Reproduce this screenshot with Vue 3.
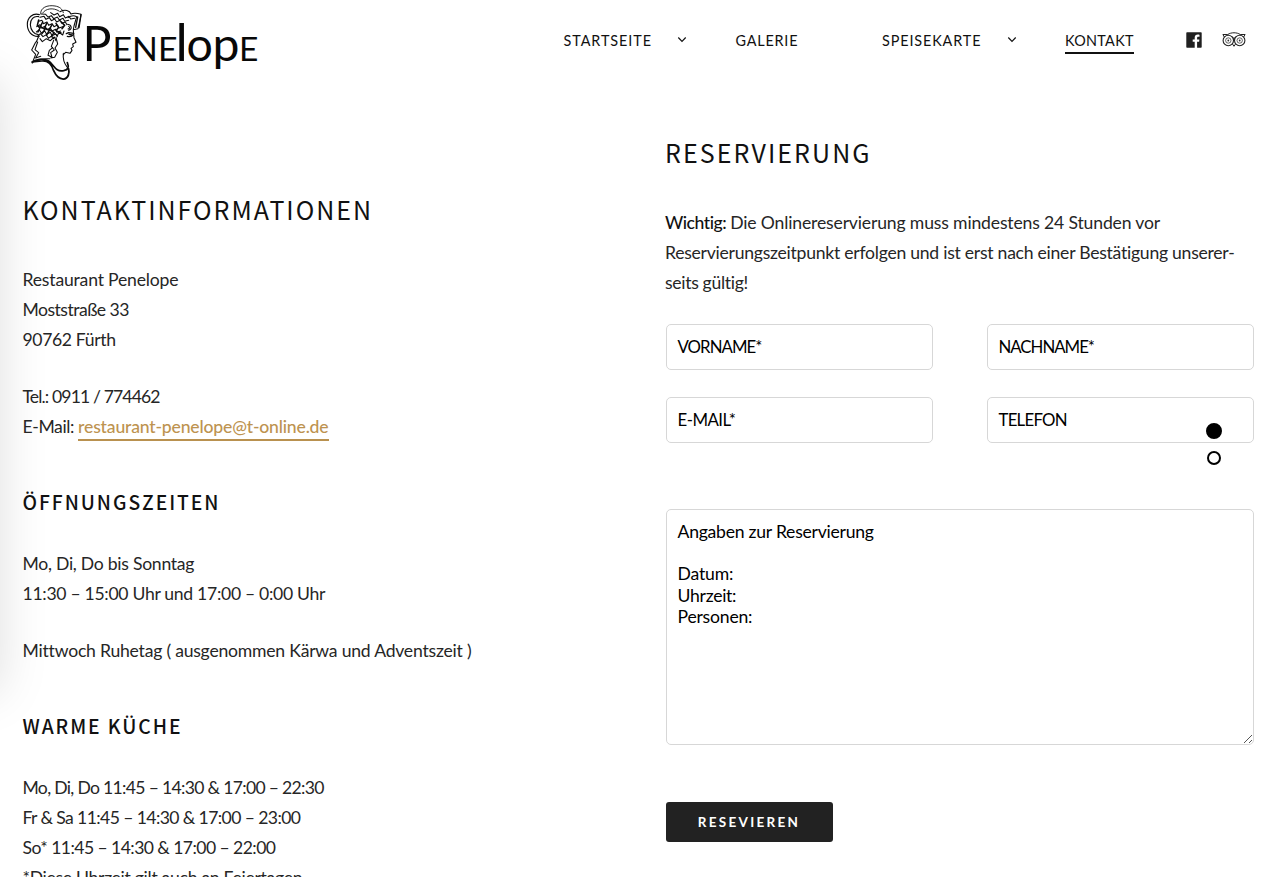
<script setup>
// Tracks each line of text out to a set width in pixels.
const vFit = {
  mounted(el, { value }) {
    const count = el.textContent.trim().length
    const natural = el.getBoundingClientRect().width
    el.style.letterSpacing = `${(value - natural) / (count - 1)}px`
  },
}

const fields = [
  { label: 'VORNAME*', width: 85 },
  { label: 'NACHNAME*', width: 96.5 },
  { label: 'E-MAIL*', width: 58.5 },
  { label: 'TELEFON', width: 69 },
]
</script>

<template>
  <div class="page">
    <div class="side-shadow"></div>

    <header class="header">
      <a class="logo">
        <svg width="270" height="84" viewBox="0 0 270 84">
          <g transform="translate(20 0) scale(.33333)" fill="none" stroke="#0b0b0b" stroke-width="3.2" stroke-linejoin="round" stroke-linecap="round">
            <path stroke-width="3.4" d="M58 44C38 38 22 53 22 73C22 94 35 110 55 109M56 50C40 47 31 59 31 74C32 91 42 103 55 104" />
            <path stroke-width="2.600" d="M62 42C60 23 82 14 105 18C118 20 127 26 130 38M68 39C77 25 100 22 117 33" />
            <path d="M120 35C135 27 149 31 153 42C164 37 174 40 183 43L182 51L174 86L160 89L162 78L170 50C158 44 151 48 144 53" />
            <path stroke-width="4" d="M183 44L177 83M173 51L167 82" />
            <path d="M60 52L72 49L78 58L88 53L94 62L104 57L110 66L120 61L126 70L136 66L141 74" />
            <path d="M64 42L77 43L84 51L94 47L101 56L112 51L118 60L129 55L134 64L146 61" />
            <path d="M92 38L102 45L113 40L119 50L130 44L136 54L147 49L152 57L164 55" />
            <path d="M56 64L66 61L70 71L81 66L86 76L96 71L102 80L112 75L117 84L128 80" />
            <path d="M50 80L60 74L65 84L75 79L81 89L91 84L96 93L107 88L111 97L122 93" />
            <path d="M49 96L58 89L64 99L74 93L80 103L91 97L96 107L107 102L112 110" />
            <path d="M53 109L61 101L69 110L79 104L85 115L95 108L101 116" />
            <path stroke-width="4.600" d="M56 60L52 76L60 84L54 96M68 66L61 80L75 88L66 101M80 70L74 84L88 91L79 106M96 74L88 88L102 98L94 110M108 70L116 82L108 92L123 99M124 66L134 76L126 86" />
            <path d="M143 73C155 75 158 87 146 91M146 79C151 82 149 86 144 87M132 93L128 105L117 97L112 107L102 98" />
            <path stroke-width="4" d="M139 101L146 98L161 100M142 109C149 111 156 109 160 104M147 103L156 105" />
            <path d="M160 91L162 113L168 127L158 132L160 140L153 145L156 151L150 160L137 157L130 164" />
            <path d="M58 108C50 115 54 123 46 128L35 150L47 163L38 186L60 178L78 176L89 176M53 126L45 149L56 158L47 174L62 169M60 116L67 125L79 116L91 122L103 111L108 122" />
            <path d="M101 121L94 139L103 150L92 158L96 172L84 166L88 151L98 143M108 112L113 132L105 144L112 157L104 172L92 174" />
            <path d="M130 160C128 177 132 190 142 202C151 217 145 235 130 238" />
            <path stroke-width="5.2" d="M37 188C49 174 79 176 91 187C105 202 109 216 131 212C144 209 148 202 142 188M36 186L65 183C84 181 96 196 101 212C109 230 119 238 132 237C145 235 149 220 146 207" />
          </g>
          <g class="wordmark">
            <text x="82.500" y="61" font-size="49" textLength="29" lengthAdjust="spacingAndGlyphs">P</text>
            <text x="112.500" y="61" font-size="33.500" textLength="65" lengthAdjust="spacingAndGlyphs">ENE</text>
            <text x="175.500" y="61" font-size="52">l</text>
            <text x="186.500" y="61" font-size="46.500">o</text>
            <text x="212.500" y="61" font-size="46.500" textLength="27" lengthAdjust="spacingAndGlyphs">p</text>
            <text x="239" y="61" font-size="33.500">E</text>
          </g>
        </svg>
      </a>

      <nav class="nav">
        <a class="start"><span v-fit="87.5">STARTSEITE</span>
          <svg class="chev" width="10" height="8" viewBox="0 0 10 8"><path d="M1.300 1.500L5 5.300L8.700 1.500" /></svg>
        </a>
        <a class="gallery"><span v-fit="62">GALERIE</span></a>
        <a class="menu"><span v-fit="98.5">SPEISEKARTE</span>
          <svg class="chev" width="10" height="8" viewBox="0 0 10 8"><path d="M1.300 1.500L5 5.300L8.700 1.500" /></svg>
        </a>
        <a class="contact"><span v-fit="68.5">KONTAKT</span></a>
        <svg class="fb" width="16" height="16" viewBox="0 0 16 16">
          <path fill="#202020" d="M1 .3H15Q15.700 .3 15.700 1V15Q15.700 15.700 15 15.700H11.100V9.800H13.100L13.400 7.400H11.100V6C11.100 5.200 11.400 4.800 12.400 4.800H13.500V2.700C13 2.600 12.400 2.600 11.800 2.600C9.900 2.600 8.700 3.700 8.700 5.700V7.400H6.700V9.800H8.700V15.700H1Q.3 15.700 .3 15V1Q.3 .3 1 .3Z" />
        </svg>
        <svg class="trip" width="24" height="16" viewBox="0 0 24 16" fill="none" stroke="#222">
          <path d="M5.800 2.500C9 .2 15 .2 18.200 2.500M5.800 2.500H.9L2.300 5M18.200 2.500H23.100L21.700 5" stroke-width="1" />
          <circle cx="6.300" cy="8.500" r="5.200" stroke-width="1.100" /><circle cx="17.700" cy="8.500" r="5.200" stroke-width="1.100" />
          <circle cx="6.300" cy="8.500" r="2.700" stroke-width=".7" /><circle cx="17.700" cy="8.500" r="2.700" stroke-width=".7" />
          <circle cx="6.300" cy="8.500" r=".9" fill="#333" stroke="none" /><circle cx="17.700" cy="8.500" r=".9" fill="#333" stroke="none" />
          <path d="M10.500 12L12 14.300L13.500 12M10.300 4.500Q12 6 12 8.500Q12 6 13.700 4.500" stroke-width="1" />
        </svg>
      </nav>
    </header>

    <main class="columns">
      <section class="info">
        <h2><span v-fit="348.5">KONTAKTINFORMATIONEN</span></h2>
        <p>
          <span v-fit="156">Restaurant Penelope</span><br>
          <span v-fit="107">Moststraße 33</span><br>
          <span v-fit="93.5">90762 Fürth</span>
        </p>
        <p>
          <span v-fit="138">Tel.: 0911 / 774462</span><br>
          <span v-fit="52">E-Mail:</span><a class="mail"><span v-fit="250.5">restaurant-penelope@t-online.de</span></a>
        </p>
        <h3><span v-fit="196">ÖFFNUNGSZEITEN</span></h3>
        <p>
          <span v-fit="172">Mo, Di, Do bis Sonntag</span><br>
          <span v-fit="303">11:30 – 15:00 Uhr und 17:00 – 0:00 Uhr</span>
        </p>
        <p><span v-fit="448.5">Mittwoch Ruhetag ( ausgenommen Kärwa und Adventszeit )</span></p>
        <h3><span v-fit="158">WARME KÜCHE</span></h3>
        <p>
          <span v-fit="302">Mo, Di, Do 11:45 – 14:30 &amp; 17:00 – 22:30</span><br>
          <span v-fit="278.5">Fr &amp; Sa 11:45 – 14:30 &amp; 17:00 – 23:00</span><br>
          <span v-fit="253.5">So* 11:45 – 14:30 &amp; 17:00 – 22:00</span><br>
          <span v-fit="280">*Diese Uhrzeit gilt auch an Feiertagen</span>
        </p>
      </section>

      <section class="booking">
        <h2><span v-fit="204.5">RESERVIERUNG</span></h2>
        <p>
          <span v-fit="62" class="strong">Wichtig:</span><span v-fit="430" class="after">Die Onlinereservierung muss mindestens 24 Stunden vor</span><br>
          <span v-fit="570">Reservierungszeitpunkt erfolgen und ist erst nach einer Bestätigung unserer-</span><br>
          <span v-fit="83.5">seits gültig!</span>
        </p>
        <form>
          <div class="fields">
            <div v-for="field in fields" :key="field.label" class="field">
              <span v-fit="field.width">{{ field.label }}</span>
            </div>
          </div>
          <div class="message">
            <span v-fit="196.5">Angaben zur Reservierung</span><br><br>
            <span v-fit="56">Datum:</span><br>
            <span v-fit="59">Uhrzeit:</span><br>
            <span v-fit="75">Personen:</span>
            <svg class="grip" width="10" height="10" viewBox="0 0 10 10"><path d="M1 9L9 1M6 9L9 6" /></svg>
          </div>
          <button type="button"><span v-fit="100">RESEVIEREN</span></button>
        </form>
      </section>
    </main>

    <div class="dots"><i class="dot on"></i><i class="dot"></i></div>
  </div>
</template>

<style>
html, body { background: #fff; overflow: hidden; }
</style>

<style scoped>
.page { position: relative; height: 877px; overflow: hidden; font-family: Lato, sans-serif; font-size: 17.600px; line-height: 30px; color: #262626; }
.page span { display: inline-block; white-space: nowrap; }
.side-shadow { position: absolute; left: -300px; top: 78px; width: 300px; height: 614px; box-shadow: 0 0 46px rgba(0, 0, 0, .13); }
.header { position: relative; display: flex; height: 84px; }
.logo { width: 270px; }
.logo svg { display: block; }
.wordmark { font-family: Lato, sans-serif; fill: #080808; }
.nav { display: flex; align-items: flex-start; padding: 29px 0 0 293.500px; font-size: 14.400px; line-height: 24px; color: #111; }
.nav a { display: flex; align-items: center; height: 22px; flex: none; }
.nav a span { position: relative; top: 1px; }
.start { width: 172px; }
.gallery { width: 146.500px; }
.menu { width: 183px; }
.chev { margin-left: auto; fill: none; stroke: #111; stroke-width: 1.200; }
.start .chev, .menu .chev { margin-right: 48.500px; }
.nav .contact { width: 69px; border-bottom: 2px solid #111; height: 23px; }
.contact span { margin-top: -1px; }
.fb { margin: 3px 0 0 51.500px; flex: none; }
.trip { margin: 3px 0 0 20.500px; flex: none; }
.columns { position: relative; display: grid; grid-template-columns: 642.500px 590px; padding-left: 22.500px; }
.info { padding-top: 105px; }
.booking { padding-top: 48px; }
h2, h3 { margin: 0; font-family: "Noto Sans CJK SC", sans-serif; color: #111; }
h2 { height: 40px; line-height: 40px; font-size: 25px; font-weight: 400; margin-bottom: 36px; }
h3 { height: 30px; line-height: 30px; font-size: 19.300px; font-weight: 500; margin: 45px 0 32px; }
p { margin: 0 0 27px; }
.mail { display: inline-block; margin-left: 4px; height: 27px; width: 250.500px; border-bottom: 2px solid #b9914f; color: #bd9350; font-weight: 500; }
.strong { font-weight: 500; color: #111; }
.after { margin-left: 4px; }
.fields { display: grid; grid-template-columns: 267.500px 267.500px; column-gap: 53.500px; row-gap: 27px; margin-top: -1px; padding-left: .5px; }
.field { box-sizing: border-box; height: 46px; border: 1px solid #d7d7d7; border-radius: 5px; padding: 0 11px; line-height: 44px; font-size: 16.800px; color: #000; background: #fff; }
.message { position: relative; box-sizing: border-box; width: 588px; height: 236px; margin: 66px 0 0 .5px; padding: 11px; border: 1px solid #d7d7d7; border-radius: 5px; font-size: 17.600px; line-height: 21.200px; color: #000; background: #fff; }
.grip { position: absolute; right: 0; bottom: 0; fill: none; stroke: #555; stroke-width: 1; }
button { display: flex; align-items: center; justify-content: center; width: 167px; height: 40px; margin: 57px 0 0 .5px; padding: 0; border: 0; border-radius: 3px; background: #222; color: #fff; font: 700 13.500px Lato, sans-serif; }
.dots { position: absolute; left: 1206px; top: 423px; width: 16px; display: flex; flex-direction: column; align-items: center; gap: 12px; }
.dot { box-sizing: border-box; width: 14px; height: 14px; border: 2px solid #000; border-radius: 50%; background: #fff; }
.dot.on { width: 16px; height: 16px; background: #000; }
</style>
